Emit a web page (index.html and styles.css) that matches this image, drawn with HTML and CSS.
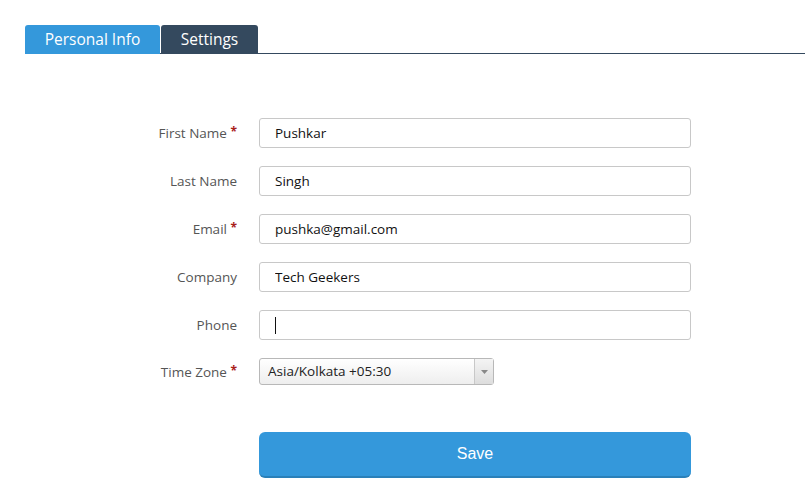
FILE: index.html
```html
<!DOCTYPE html>
<html lang="en">
    <head>
        <meta charset="UTF-8" />
        <title>Profile</title>
        <link rel="stylesheet" href="styles.css">
    </head>
    <body>
        <ul class="tabs">
            <li class="tab active">Personal Info</li>
            <li class="tab dark">Settings</li>
        </ul>

        <form class="profile">
            <label class="label">First Name <span class="req">*</span></label>
            <input class="field" type="text" value="Pushkar">

            <label class="label">Last Name</label>
            <input class="field" type="text" value="Singh">

            <label class="label">Email <span class="req">*</span></label>
            <input class="field" type="text" value="pushka@gmail.com">

            <label class="label">Company</label>
            <input class="field" type="text" value="Tech Geekers">

            <label class="label">Phone</label>
            <div class="field phone"><span class="caret"></span></div>

            <label class="label">Time Zone <span class="req">*</span></label>
            <div class="select">
                <span class="select-text">Asia/Kolkata +05:30</span>
                <span class="select-arrow"><svg width="7" height="4" viewBox="0 0 7 4"><path d="M0 0h7L3.5 4z" fill="#888"/></svg></span>
            </div>

            <span></span>
            <button class="save" type="button">Save</button>
        </form>
    </body>
</html>
```
FILE: styles.css
```css
* {
    margin: 0;
    padding: 0;
    box-sizing: border-box;
}

body {
    background: #fff;
    font-family: "Open Sans", "Liberation Sans", sans-serif;
}

li {
    list-style-type: none;
}

.tabs {
    display: flex;
    gap: 1px;
    margin: 25px 0 0 25px;
    border-bottom: 1px solid #34495e;
}

.tab {
    height: 29px;
    line-height: 28px;
    padding: 0 20px;
    margin-bottom: -1px;
    font-size: 15.5px;
    color: #fff;
    border-radius: 3px 3px 0 0;
}

.tab.active {
    width: 135px;
    background: #3498db;
    text-align: center;
    padding: 0;
}

.tab.dark {
    width: 97px;
    background: #34495e;
    text-align: center;
    padding: 0;
}

.profile {
    display: grid;
    grid-template-columns: 237px 432px;
    column-gap: 22px;
    row-gap: 18px;
    margin-top: 64px;
    align-items: center;
}

.label {
    text-align: right;
    font-size: 13.5px;
    color: #555;
}

.req {
    color: #a8201a;
    font-weight: bold;
    font-size: 12px;
    position: relative;
    top: -2px;
}

.field {
    height: 30px;
    border: 1px solid #c8c8c8;
    border-radius: 3px;
    padding: 0 15px;
    font-family: "Open Sans", "Liberation Sans", sans-serif;
    font-size: 13.5px;
    color: #111;
    outline: none;
}

.phone {
    display: flex;
    align-items: center;
}

.caret {
    width: 1px;
    height: 17px;
    background: #111;
}

.select {
    display: flex;
    width: 235px;
    height: 27px;
    border: 1px solid #b8b8b8;
    border-radius: 3px;
    background: linear-gradient(#fff, #eee);
    font-size: 13.5px;
    color: #222;
}

.select-text {
    flex: 1;
    line-height: 25px;
    padding-left: 8px;
}

.select-arrow {
    width: 19px;
    display: flex;
    align-items: center;
    justify-content: center;
    border-left: 1px solid #c8c8c8;
    background: linear-gradient(#f4f4f4, #ddd);
}

.save {
    margin-top: 29px;
    height: 46px;
    background: #3498db;
    border: none;
    border-bottom: 2px solid #2a80b9;
    border-radius: 6px;
    color: #fff;
    font-family: "Liberation Sans", sans-serif;
    font-size: 16px;
}
```
